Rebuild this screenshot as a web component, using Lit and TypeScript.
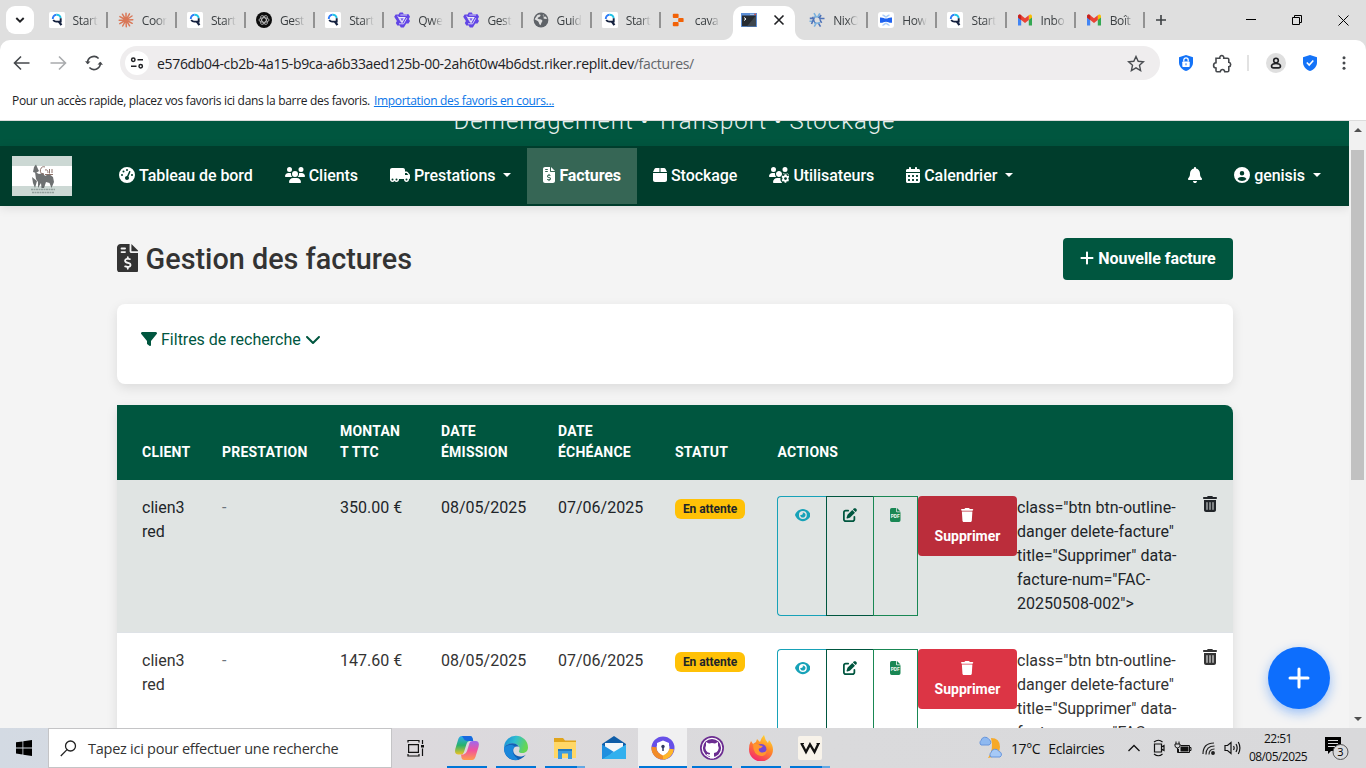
import { LitElement, html, css, svg, nothing } from "lit";
import { customElement, property } from "lit/decorators.js";

type Glyph = { w: number; d: string };

/* Solid glyphs on a 512-unit-high grid. */
const GLYPHS: Record<string, Glyph> = {
  gauge: { w: 512, d: "M0 256a256 256 0 1 1 512 0A256 256 0 1 1 0 256zM288 96a32 32 0 1 0 -64 0 32 32 0 1 0 64 0zM256 416c35.3 0 64-28.7 64-64c0-17.4-6.9-33.1-18.1-44.6L366 161.7c5.3-12.1-.2-26.3-12.3-31.6s-26.3 .2-31.6 12.3L257.9 288c-.6 0-1.3 0-1.9 0c-35.3 0-64 28.7-64 64s28.7 64 64 64zM176 144a32 32 0 1 0 -64 0 32 32 0 1 0 64 0zM96 288a32 32 0 1 0 0-64 32 32 0 1 0 0 64zm352-32a32 32 0 1 0 -64 0 32 32 0 1 0 64 0z" },
  users: { w: 640, d: "M144 0a80 80 0 1 1 0 160A80 80 0 1 1 144 0zM512 0a80 80 0 1 1 0 160A80 80 0 1 1 512 0zM0 298.7C0 239.8 47.8 192 106.7 192h42.7c15.9 0 31 3.5 44.6 9.7c-1.3 7.2-1.9 14.7-1.9 22.3c0 38.2 16.8 72.5 43.3 96c-.2 0-.4 0-.7 0H21.3C9.6 320 0 310.4 0 298.7zM405.3 320c-.2 0-.4 0-.7 0c26.6-23.5 43.3-57.8 43.3-96c0-7.6-.7-15-1.9-22.3c13.6-6.3 28.7-9.7 44.6-9.7h42.7C592.2 192 640 239.8 640 298.7c0 11.8-9.6 21.3-21.3 21.3H405.3zM224 224a96 96 0 1 1 192 0 96 96 0 1 1 -192 0zM128 485.3C128 411.7 187.7 352 261.3 352H378.7C452.3 352 512 411.7 512 485.3c0 14.7-11.9 26.7-26.7 26.7H154.7c-14.7 0-26.7-11.9-26.7-26.7z" },
  usersGear: { w: 640, d: "M144 160A80 80 0 1 0 144 0a80 80 0 1 0 0 160zm368 0A80 80 0 1 0 512 0a80 80 0 1 0 0 160zM0 298.7C0 310.4 9.6 320 21.3 320H234.7c.2 0 .4 0 .7 0c-26.6-23.5-43.3-57.8-43.3-96c0-7.6 .7-15 1.9-22.3c-13.6-6.3-28.7-9.7-44.6-9.7H106.7C47.8 192 0 239.8 0 298.7zM320 320c24 0 45.900-8.800 62.700-23.300L390 284C408 266 416 244 416 224c0-53-43-96-96-96s-96 43-96 96s43 96 96 96zM364.600 352H261.300C187.700 352 128 411.700 128 485.300c0 14.700 11.900 26.700 26.700 26.700H420L372 440 364 400zM445 208H600Q640 245 640 270L600 230 560 216H500L446 230zM496 234H560L568 272 596 288 630 274 640 300V324L620 350V386L640 412 614 466 576 456 560 466 552 500H502L490 464 468 454 434 466 404 414 430 386V350L402 320 430 272 468 284 490 270zM528 416a46 46 0 1 0 0-92 46 46 0 1 0 0 92z" },
  truck: { w: 640, d: "M64 32C28.7 32 0 60.7 0 96V304v80 16c0 44.2 35.8 80 80 80c26.2 0 49.4-12.6 64-32c14.6 19.4 37.8 32 64 32c44.2 0 80-35.8 80-80c0-5.5-.6-10.8-1.6-16H416h33.6c-1 5.2-1.600 10.500-1.600 16c0 44.2 35.8 80 80 80s80-35.8 80-80c0-5.5-.6-10.8-1.6-16H608c17.700 0 32-14.300 32-32V288 272 261.700c0-9.200-3.200-18.200-9-25.300l-58.800-71.800c-10.600-13-26.500-20.500-43.300-20.500H480V96c0-35.300-28.700-64-64-64H64zM585 256H480V192h48.800c2.400 0 4.700 1.100 6.200 2.900L585 256zM528 368a32 32 0 1 1 0 64 32 32 0 1 1 0-64zM176 400a32 32 0 1 1 64 0 32 32 0 1 1 -64 0zM80 368a32 32 0 1 1 0 64 32 32 0 1 1 0-64z" },
  invoice: { w: 384, d: "M64 0C28.7 0 0 28.7 0 64V448c0 35.3 28.7 64 64 64H320c35.3 0 64-28.7 64-64V160H256c-17.7 0-32-14.3-32-32V0H64zM256 0V128H384L256 0zM64 80c0-8.8 7.2-16 16-16h64c8.8 0 16 7.2 16 16s-7.2 16-16 16H80c-8.800 0-16-7.200-16-16zm0 64c0-8.800 7.200-16 16-16h64c8.800 0 16 7.200 16 16s-7.200 16-16 16H80c-8.800 0-16-7.200-16-16zm128 72c8.800 0 16 7.200 16 16v17.300c8.500 1.200 16.700 3.100 24.100 5.100c8.500 2.300 13.600 11 11.300 19.600s-11 13.600-19.600 11.300c-11.100-3-22-5.200-32.100-5.300c-8.400-.1-17.400 1.800-23.600 5.500c-5.700 3.400-8.100 7.300-8.100 12.800c0 3.700 1.300 6.500 7.300 10.100c6.900 4.100 16.600 7.100 29.200 10.900l.5 .1c11.300 3.400 25.300 7.600 36.300 14.600c12.100 7.600 22.400 19.700 22.700 38.200c.3 19.300-9.600 33.300-22.900 41.600c-7.700 4.800-16.400 7.600-25.100 9.100V440c0 8.800-7.200 16-16 16s-16-7.200-16-16V422.200c-11.200-2.100-21.700-5.700-30.900-8.900c-2.100-.7-4.200-1.400-6.200-2.100c-8.400-2.800-12.900-11.900-10.100-20.200s11.900-12.900 20.200-10.100c2.500 .8 4.800 1.600 7.100 2.400c13.600 4.600 24.600 8.400 36.300 8.700c9.100 .3 17.900-1.700 23.700-5.300c5.100-3.200 7.900-7.300 7.800-14c-.1-4.600-1.800-7.800-7.700-11.600c-6.800-4.300-16.500-7.400-29-11.200l-1.600-.5c-11-3.300-24.300-7.300-34.800-13.700c-12-7.200-22.600-18.900-22.700-37.300c-.1-19.400 10.800-32.800 23.800-40.500c7.500-4.400 15.800-7.200 24.100-8.700V232c0-8.800 7.200-16 16-16z" },
  box: { w: 448, d: "M50.7 58.5L0 160H208V32H93.7C75.5 32 58.9 42.3 50.7 58.5zM240 160H448L397.3 58.5C389.1 42.3 372.5 32 354.3 32H240V160zm208 32H0V416c0 35.3 28.7 64 64 64H384c35.3 0 64-28.7 64-64V192z" },
  calendar: { w: 448, d: "M128 0c17.7 0 32 14.3 32 32V64H288V32c0-17.7 14.3-32 32-32s32 14.3 32 32V64h48c26.500 0 48 21.500 48 48v48H0V112C0 85.500 21.500 64 48 64H96V32c0-17.700 14.300-32 32-32zM0 192H448V464c0 26.500-21.500 48-48 48H48c-26.500 0-48-21.500-48-48V192zm64 80v32c0 8.800 7.200 16 16 16h32c8.800 0 16-7.200 16-16V272c0-8.800-7.200-16-16-16H80c-8.800 0-16 7.200-16 16zm128 0v32c0 8.800 7.200 16 16 16h32c8.800 0 16-7.200 16-16V272c0-8.800-7.200-16-16-16H208c-8.800 0-16 7.200-16 16zm144-16c-8.800 0-16 7.200-16 16v32c0 8.800 7.200 16 16 16h32c8.800 0 16-7.200 16-16V272c0-8.800-7.200-16-16-16H336zM64 400v32c0 8.800 7.200 16 16 16h32c8.800 0 16-7.200 16-16V400c0-8.800-7.200-16-16-16H80c-8.800 0-16 7.200-16 16zm144-16c-8.800 0-16 7.200-16 16v32c0 8.800 7.200 16 16 16h32c8.800 0 16-7.200 16-16V400c0-8.800-7.200-16-16-16H208zm112 16v32c0 8.800 7.200 16 16 16h32c8.800 0 16-7.200 16-16V400c0-8.800-7.200-16-16-16H336c-8.800 0-16 7.200-16 16z" },
  bell: { w: 448, d: "M224 0c-17.7 0-32 14.3-32 32V51.2C119 66 64 130.6 64 208v18.8c0 47-17.3 92.4-48.5 127.6l-7.4 8.3c-8.4 9.4-10.4 22.9-5.3 34.4S19.4 416 32 416H416c12.6 0 24-7.4 29.2-18.9s3.1-25-5.3-34.4l-7.4-8.3C401.3 319.2 384 273.9 384 226.8V208c0-77.4-55-142-128-156.8V32c0-17.7-14.3-32-32-32zm45.3 493.3c12-12 18.7-28.3 18.7-45.3H224 160c0 17 6.7 33.3 18.7 45.3s28.3 18.7 45.3 18.7s33.3-6.7 45.3-18.7z" },
  circleUser: { w: 512, d: "M399 384.2C376.9 345.8 335.4 320 288 320H224c-47.4 0-88.9 25.8-111 64.2c35.2 39.2 86.2 63.8 143 63.8s107.8-24.7 143-63.8zM0 256a256 256 0 1 1 512 0A256 256 0 1 1 0 256zm256 16a72 72 0 1 0 0-144 72 72 0 1 0 0 144z" },
  plus: { w: 448, d: "M256 80c0-17.7-14.3-32-32-32s-32 14.3-32 32V224H48c-17.7 0-32 14.3-32 32s14.3 32 32 32H192V432c0 17.7 14.3 32 32 32s32-14.3 32-32V288H400c17.7 0 32-14.3 32-32s-14.3-32-32-32H256V80z" },
  filter: { w: 512, d: "M3.9 54.9C10.5 40.9 24.5 32 40 32H472c15.5 0 29.5 8.9 36.1 22.9s4.6 30.5-5.2 42.5L320 320.9V448c0 12.1-6.8 23.2-17.7 28.6s-23.8 4.3-33.5-3l-64-48c-8.1-6-12.8-15.5-12.8-25.6V320.9L9 97.3C-.7 85.4-2.8 68.8 3.9 54.9z" },
  chevron: { w: 512, d: "M233.4 406.6c12.5 12.5 32.8 12.5 45.3 0l192-192c12.5-12.5 12.5-32.8 0-45.3s-32.8-12.5-45.3 0L256 338.7 86.6 169.4c-12.5-12.5-32.8-12.5-45.3 0s-12.5 32.8 0 45.3l192 192z" },
  eye: { w: 576, d: "M288 32c-80.8 0-145.5 36.8-192.6 80.6C48.6 156 17.3 208 2.5 243.7c-3.3 7.9-3.3 16.7 0 24.6C17.3 304 48.6 356 95.4 399.4C142.5 443.2 207.2 480 288 480s145.5-36.8 192.6-80.6c46.8-43.5 78.1-95.4 93-131.1c3.3-7.900 3.300-16.700 0-24.600c-14.900-35.700-46.200-87.700-93-131.100C433.500 68.800 368.800 32 288 32zM144 256a144 144 0 1 1 288 0 144 144 0 1 1 -288 0zm144-64c0 35.300-28.700 64-64 64c-7.100 0-13.900-1.200-20.300-3.300c-5.500-1.800-11.900 1.600-11.700 7.400c.3 6.900 1.300 13.800 3.200 20.700c13.700 51.200 66.400 81.600 117.600 67.900s81.600-66.400 67.900-117.600c-11.100-41.500-47.800-69.400-88.600-71.100c-5.800-.2-9.200 6.100-7.400 11.700c2.100 6.400 3.300 13.200 3.300 20.300z" },
  edit: { w: 512, d: "M471.6 21.7c-21.9-21.9-57.3-21.9-79.2 0L362.3 51.7l97.9 97.9 30.1-30.1c21.9-21.9 21.9-57.3 0-79.2L471.6 21.7zm-299.2 220c-6.1 6.1-10.8 13.6-13.5 21.9l-29.6 88.8c-2.9 8.6-.6 18.1 5.8 24.6s15.9 8.7 24.6 5.8l88.8-29.6c8.2-2.7 15.7-7.4 21.9-13.5L437.7 172.3 339.7 74.3 172.4 241.7zM96 64C43 64 0 107 0 160V416c0 53 43 96 96 96H352c53 0 96-43 96-96V320c0-17.7-14.3-32-32-32s-32 14.3-32 32v96c0 17.7-14.3 32-32 32H96c-17.7 0-32-14.3-32-32V160c0-17.7 14.3-32 32-32h96c17.7 0 32-14.3 32-32s-14.3-32-32-32H96z" },
  trash: { w: 448, d: "M135.2 17.7L128 32H32C14.3 32 0 46.3 0 64S14.3 96 32 96H416c17.7 0 32-14.3 32-32s-14.3-32-32-32H320l-7.2-14.3C307.4 6.8 296.3 0 284.2 0H163.8c-12.1 0-23.2 6.8-28.6 17.7zM416 128H32L53.2 467c1.6 25.3 22.6 45 47.9 45H346.9c25.3 0 46.3-19.7 47.9-45L416 128z" },
  trashCan: { w: 448, d: "M135.2 17.7C140.6 6.8 151.7 0 163.8 0H284.2c12.1 0 23.2 6.8 28.6 17.7L320 32h96c17.7 0 32 14.3 32 32s-14.3 32-32 32H32C14.3 96 0 81.7 0 64S14.3 32 32 32h96l7.2-14.3zM32 128H416V448c0 35.3-28.7 64-64 64H96c-35.3 0-64-28.7-64-64V128zm96 64c-8.8 0-16 7.2-16 16V432c0 8.8 7.2 16 16 16s16-7.2 16-16V208c0-8.8-7.2-16-16-16zm96 0c-8.8 0-16 7.2-16 16V432c0 8.8 7.2 16 16 16s16-7.2 16-16V208c0-8.8-7.2-16-16-16zm96 0c-8.8 0-16 7.2-16 16V432c0 8.8 7.2 16 16 16s16-7.2 16-16V208c0-8.8-7.2-16-16-16z" },
};

const glyph = (name: string, size = 16) => {
  const g = GLYPHS[name];
  return html`<svg class="glyph" width=${(g.w / 512) * size} height=${size} viewBox="0 0 ${g.w} 512" fill="currentColor" fill-rule="evenodd"><path d=${g.d}></path></svg>`;
};

const pdfGlyph = html`<svg class="glyph" width="10.5" height="14" viewBox="0 0 10.5 14"><path fill="currentColor" d="M1.700 0H6.200V3.500Q6.200 4.300 7 4.300H10.500V12.300Q10.500 14 8.800 14H1.700Q0 14 0 12.300V1.700Q0 0 1.700 0zM7 0V3.500H10.500z"></path><text x="5.25" y="10.300" text-anchor="middle" font-family="Roboto, sans-serif" font-size="5" font-weight="700" fill="#f0f6f3">PDF</text></svg>`;

/* 16px favicons of the browser tabs. */
const FAVICONS: Record<string, unknown> = {
  search: svg`<rect width="16" height="16" rx="1.500" fill="#fff"/><g fill="none" stroke-width="1.900"><path d="M3.800 7A3.900 3.900 0 0 1 7.400 2.700" stroke="#2f7bf6"/><path d="M7.400 2.700A3.900 3.900 0 0 1 11.700 6.300" stroke="#22c3e6"/><path d="M11.700 6.300V9.600H7.800A3.900 3.900 0 0 1 4.200 8" stroke="#14213f"/><path d="M9.800 9.300L12.400 13.200" stroke="#14213f" stroke-width="2.200"/></g>`,
  burst: svg`<g stroke="#d97757" stroke-width="1.500" stroke-linecap="round"><path d="M8 8L8 1.200M8 8L11.500 1.800M8 8L14 4M8 8L14.800 7.700M8 8L14.200 11.300M8 8L11.600 13.800M8 8L8.300 14.800M8 8L4.700 14M8 8L1.800 11.600M8 8L1.200 8.200M8 8L1.900 4.600M8 8L4.400 2.200"/></g>`,
  knot: svg`<circle cx="8" cy="8" r="8" fill="#0d0d0d"/><g fill="none" stroke="#dedede" stroke-width=".7"><ellipse cx="8" cy="8" rx="5" ry="2.200"/><ellipse cx="8" cy="8" rx="5" ry="2.200" transform="rotate(60 8 8)"/><ellipse cx="8" cy="8" rx="5" ry="2.200" transform="rotate(120 8 8)"/></g>`,
  qwen: svg`<path d="M5.800 .5H8.800L9.800 2.300H14.600L16 4.800L14.800 6.900L16 9L14.500 11.500H12.300L9.800 15.600H6.800L5.700 13.600H3.300L1.800 11L2.900 9L.2 4.800L1.600 2.400H4.600z" fill="#6246e5"/><path d="M4.200 5H11.800L8 11.500z" fill="#ececf4"/><path d="M6.300 3H13M3.600 3.800L7 9.800M12.800 6.200L9.300 12.300M5 11.800H9" stroke="#d5cef6" stroke-width="1" fill="none"/><path d="M6.300 6.200H9.700L8 9.200z" fill="#7a62ee"/>`,
  globe: svg`<circle cx="8" cy="8" r="7.400" fill="#5f6368"/><path d="M4.300 3.300C7 1.500 8.500 3 7 4.400L4.800 5.800C4 7 6.500 7.300 8 7.500C10 8 9.500 9.500 8.600 10.500L7.500 13.200C6 12.500 6.200 10.300 5 9.200L1.600 7.200M10.300 2C9 4 10.500 5 12.500 4.500L14.300 6.500C13 7.500 11.500 6.500 10.800 7" fill="#dfdfdf"/>`,
  replit: svg`<g fill="#f26207"><rect x="1.800" y="1.800" width="5.800" height="4.200" rx=".9"/><rect x="7.200" y="5.900" width="5.400" height="4.200" rx=".9"/><rect x="1.800" y="10" width="5.800" height="4.200" rx=".9"/></g>`,
  terminal: svg`<rect y="1" width="16" height="14" fill="#5d8fd6"/><rect x="1" y="3.500" width="14" height="10.700" fill="#262b31"/><path d="M15 3.500V14.200H6z" fill="#3e464e"/><path d="M3 5.500L5 7L3 8.500" stroke="#fff" fill="none"/><path d="M9.500 2.300H10.500M11.500 2.300H12.500" stroke="#fff"/><rect x="13.400" y="1.700" width="1.600" height="1.300" fill="#e24a3a"/>`,
  nix: svg`<g fill="none" stroke-width="1.600"><path d="M5 1.200L8 6.400M10.800 1.300L7.300 7.300M4.500 5H11" stroke="#7ab1de"/><path d="M15.500 6.500L9.500 6.500M12.600 10.800L9.400 5.200M11.500 14.600L8.200 9.200" stroke="#5074b8"/><path d="M5.200 14.600L8.300 9.300M11 10.900H5M.5 9.300H6.500" stroke="#7ab1de"/><path d="M3.300 5L6.500 10.500M.8 6.400H5L2.500 12" stroke="#5074b8"/><path d="M12 3L9.500 7.500" stroke="#5074b8"/></g><circle cx="8" cy="8" r="2.500" fill="#dfdfdf"/>`,
  bone: svg`<rect width="16" height="16" rx="3" fill="#fff"/><path d="M2 5.500C5 5.200 6 6.600 8 6.600S11 5.200 14 5.500V10.800C11 11 10 9.700 8 9.700S5 11 2 10.800z" fill="#1f63ef"/><path d="M4.500 3.500C5.500 2.500 7 5 8 5S10.500 2.500 11.500 3.500M4.500 12.800C5.500 13.800 7 11.300 8 11.300S10.500 13.800 11.500 12.800" fill="none" stroke="#a9cdfb" stroke-width="1.600"/>`,
  gmail: svg`<path d="M1 13.500V4.500L4.200 6.900V13.500z" fill="#4285f4"/><path d="M11.800 13.500V6.900L15 4.500V13.500z" fill="#34a853"/><path d="M11.800 3.300L13 2.500Q15 2 15 4.500V5.500L11.800 8z" fill="#fbbc04"/><path d="M1 5.500V4.300Q1.200 2 3.200 2.600L8 6.300L11.800 3.300V8L8 10.900z" fill="#ea4335"/><path d="M1 4.300Q1.200 2 3.200 2.600L4.200 3.400V8L1 5.500z" fill="#c5221f"/>`,
};

const favicon = (name: string) => html`<svg class="favicon" width="16" height="16" viewBox="0 0 16 16">${FAVICONS[name]}</svg>`;

@customElement("browser-chrome")
class BrowserChrome extends LitElement {
  static styles = css`
    :host { display: block; height: 121px; background: #dfdfdf; font-family: "Open Sans", "Noto Sans", sans-serif; color: #202124; }
    svg { display: block; flex: none; }
    .strip { display: flex; height: 40px; align-items: center; }
    .dropdown { width: 28px; height: 28px; margin: 0 4.600px 0 6px; border-radius: 9px; background: #fff; display: grid; place-items: center; }
    .tabs { display: flex; height: 40px; width: 1106.400px; }
    .tab { box-sizing: border-box; flex: 1 1 0; min-width: 0; display: flex; align-items: center; padding-left: 10px; gap: 8px; }
    .title { width: 25px; margin-right: auto; overflow: hidden; white-space: nowrap; font-size: 12px; letter-spacing: -0.4px; color: #3c4043; -webkit-mask-image: linear-gradient(90deg, #000 55%, transparent 100%); mask-image: linear-gradient(90deg, #000 55%, transparent 100%); }
    .rule { width: 2px; height: 16px; background: #929292; }
    .active { padding: 6px 3px 0 2px; align-items: stretch; gap: 0; margin: 0 -9px; flex: 0 0 87.200px; }
    .active::before, .active::after { content: ""; width: 10px; height: 10px; align-self: flex-end; }
    .active::before { background: radial-gradient(circle at 0 0, transparent 9.500px, #fff 10.500px); }
    .active::after { background: radial-gradient(circle at 100% 0, transparent 9.500px, #fff 10.500px); }
    .face { flex: 1; display: flex; align-items: center; justify-content: space-between; padding: 0 10px 6px 8px; background: #fff; border-radius: 10px 10px 0 0; box-sizing: border-box; }
    .add { width: 32px; display: grid; place-items: center; }
    .window { margin-left: auto; display: flex; gap: 0; }
    .window span { width: 46px; height: 40px; display: grid; place-items: center; }
    .toolbar { display: flex; align-items: center; height: 46px; padding: 0 14px 0 13px; background: #fff; border-radius: 10px 10px 0 0; box-sizing: border-box; }
    .nav { display: flex; gap: 18px; width: 107px; }
    .address { display: flex; align-items: center; width: 1040px; height: 34px; box-sizing: border-box; padding: 0 15px 0 5px; border-radius: 17px; background: #efedee; }
    .site { width: 24px; height: 24px; border-radius: 50%; background: #fff; display: grid; place-items: center; margin-right: 8px; }
    .url { font-size: 14px; letter-spacing: -0.328px; white-space: nowrap; margin-right: auto; }
    .path { color: #63666b; }
    .tools { display: flex; align-items: center; margin-left: 17px; flex: 1; }
    .ext { margin-left: 16.500px; }
    .divider { width: 2px; height: 16px; background: #e2e2e2; margin: 0 17px 0 15.500px; }
    .avatar { width: 20px; height: 20px; border-radius: 50%; background: #dfdfdf; display: grid; place-items: center; margin-right: 16px; }
    .more { margin-left: auto; }
    .bookmarks { display: flex; align-items: center; padding: 0 12px 6px; background: #fff; font-size: 12px; letter-spacing: -0.31px; border-bottom: 1px solid #dcdcdc; gap: 4px; box-sizing: border-box; height: 35px; white-space: nowrap; }
    .link { color: #0b76e8; text-decoration: underline; }
  `;

  private tabs: [string, string][] = [
    ["search", "Start"], ["burst", "Coor"], ["search", "Start"], ["knot", "Gest"], ["search", "Start"],
    ["qwen", "Qwe"], ["qwen", "Gest"], ["globe", "Guid"], ["search", "Start"], ["replit", "cava"],
    ["terminal", ""], ["nix", "NixO"], ["bone", "How"], ["search", "Start"], ["gmail", "Inbo"], ["gmail", "Boît"],
  ];

  render() {
    return html`
      <div class="strip">
        <div class="dropdown"><svg width="10" height="8" viewBox="0 0 10 8" fill="none" stroke="#202124" stroke-width="1.900"><path d="M1.300 2L5 5.700L8.700 2"/></svg></div>
        <div class="tabs">
          ${this.tabs.map(([icon, title], i) =>
            title === ""
              ? html`<div class="tab active"><div class="face">${favicon(icon)}<svg width="12" height="12" viewBox="0 0 12 12" stroke="#202124" stroke-width="1.600"><path d="M1.500 1.500L10.500 10.500M10.500 1.500L1.500 10.500"/></svg></div></div>`
              : html`<div class="tab">${favicon(icon)}<span class="title">${title}</span>${i === 9 ? nothing : html`<i class="rule"></i>`}</div>`
          )}
        </div>
        <div class="add"><svg width="10" height="10" viewBox="0 0 10 10" stroke="#3c4043" stroke-width="1.600"><path d="M5 0V10M0 5H10"/></svg></div>
        <div class="window">
          <span><svg width="10" height="10" stroke="#000"><path d="M0 4.500H10"/></svg></span>
          <span><svg width="11" height="11" fill="none" stroke="#000"><path d="M.5 2.500H7.500V9.500H.5zM2.500 2.500V.5H9.500V7.500H7.500"/></svg></span>
          <span><svg width="11" height="11" stroke="#000"><path d="M.5 .5L10.500 10.500M10.500 .5L.5 10.500"/></svg></span>
        </div>
      </div>
      <div class="toolbar">
        <div class="nav">
          <svg width="18" height="16" viewBox="0 0 18 16" fill="none" stroke="#45484c" stroke-width="1.600"><path d="M16.500 8H2M8 1.500L1.500 8L8 14.500"/></svg>
          <svg width="18" height="16" viewBox="0 0 18 16" fill="none" stroke="#a9abad" stroke-width="1.600"><path d="M1.500 8H16M10 1.500L16.500 8L10 14.500"/></svg>
          <svg width="18" height="16" viewBox="0 0 18 16" fill="none" stroke="#45484c" stroke-width="1.600"><path d="M2.600 8.500A6.400 6.400 0 0 1 13.600 3.500M15.400 7.500A6.400 6.400 0 0 1 4.400 12.500"/><path d="M0 6.200L2.700 9.300L5.500 6.500M12.500 9.500L15.300 6.700L18 9.800" fill="#45484c" stroke="none"/></svg>
        </div>
        <div class="address">
          <span class="site"><svg width="14" height="12" viewBox="0 0 14 12" fill="none" stroke="#202124" stroke-width="1.500"><circle cx="3.300" cy="2.800" r="1.700"/><path d="M7.500 2.800H13M1 9.200H6.500"/><circle cx="10.700" cy="9.200" r="1.700"/></svg></span>
          <span class="url">e576db04-cb2b-4a15-b9ca-a6b33aed125b-00-2ah6t0w4b6dst.riker.replit.dev<span class="path">/factures/</span></span>
          <svg width="18" height="17" viewBox="0 0 18 17" fill="none" stroke="#4a4d51" stroke-width="1.400"><path d="M9 1.500L11.200 6.300L16.400 6.800L12.500 10.300L13.600 15.500L9 12.800L4.400 15.500L5.500 10.300L1.600 6.800L6.800 6.300z"/></svg>
        </div>
        <div class="tools">
          <svg width="18" height="18" viewBox="0 0 18 18"><path d="M9 1L16 3.300V8.500C16 12.500 13 15.600 9 17C5 15.600 2 12.500 2 8.500V3.300z" fill="#1473f8"/><rect x="5.300" y="7.500" width="7.400" height="5.500" rx=".8" fill="#fff"/><path d="M6.800 7.500V6A2.200 2.200 0 0 1 11.200 6V7.500" fill="none" stroke="#fff" stroke-width="1.300"/><path d="M9 9.300V11.300" stroke="#1473f8"/></svg>
          <svg class="ext" width="20" height="19" viewBox="0 0 20 19" fill="none" stroke="#45484c" stroke-width="1.600"><path d="M4 4.200H7.800C7.300 .6 12.300 .6 11.800 4.200H15.500Q16.800 4.200 16.800 5.500V8.200C19.300 8.600 19.300 12.400 16.800 12.800V16.500Q16.800 17.800 15.500 17.800H12.800C12.300 14.800 8.800 14.800 8.200 17.800H5Q4 17.800 4 16.500V14C.8 14 .8 9 4 8.800z"/></svg>
          <i class="divider"></i>
          <span class="avatar"><svg width="12" height="12" viewBox="0 0 12 12" fill="none" stroke="#202124" stroke-width="1.600"><circle cx="6" cy="3.500" r="2.300"/><path d="M3.500 10.900Q1.500 10.900 1.500 9Q2 6.500 6 6.500T10.500 9Q10.500 10.900 8.500 10.900z"/></svg></span>
          <svg width="16" height="18" viewBox="1 0 16 18"><path d="M9 1L16 3.300V8.500C16 12.500 13 15.600 9 17C5 15.600 2 12.500 2 8.500V3.300z" fill="#1473f8"/><path d="M5.800 8.500L8.200 11L12.300 6.500" fill="none" stroke="#fff" stroke-width="1.600"/></svg>
          <svg class="more" width="16" height="16" viewBox="0 0 16 16" fill="#45484c"><circle cx="8" cy="2.800" r="1.500"/><circle cx="8" cy="8" r="1.500"/><circle cx="8" cy="13.200" r="1.500"/></svg>
        </div>
      </div>
      <div class="bookmarks"><span>Pour un accès rapide, placez vos favoris ici dans la barre des favoris.</span><span class="link">Importation des favoris en cours...</span></div>
    `;
  }
}

@customElement("site-nav")
class SiteNav extends LitElement {
  static styles = css`
    :host { display: block; position: relative; font-family: Roboto, sans-serif; }
    .banner { height: 25px; background: #00563f; overflow: hidden; display: flex; justify-content: center; align-items: flex-end; }
    .slogan { color: #e5efec; font-size: 24px; font-weight: 300; letter-spacing: 1px; line-height: 30px; white-space: nowrap; margin-bottom: 10px; }
    nav { display: flex; align-items: center; height: 60px; background: #003d2c; padding: 0 12px; box-sizing: border-box; box-shadow: 0 2px 10px rgba(0, 0, 0, 0.1); }
    .logo { display: block; margin-right: 31px; }
    .item { display: flex; align-items: center; height: 56px; box-sizing: border-box; padding: 0 16px 2px; color: #fff; font-size: 16px; font-weight: 500; letter-spacing: -0.06px; white-space: nowrap; }
    .item span { margin-left: 4px; }
    .current { background: #366655; font-weight: 700; letter-spacing: -0.1px; }
    .caret { border: 4.8px solid transparent; border-top-color: #fff; border-bottom: 0; margin-left: 8px; }
    .end { margin-left: auto; display: flex; }
    svg { flex: none; }
  `;
  private items: [string, string, boolean, boolean][] = [
    ["gauge", "Tableau de bord", false, false], ["users", "Clients", false, false], ["truck", "Prestations", true, false],
    ["invoice", "Factures", false, true], ["box", "Stockage", false, false], ["usersGear", "Utilisateurs", false, false], ["calendar", "Calendrier", true, false],
  ];
  render() {
    return html`
      <div class="banner"><div class="slogan">Déménagement • Transport • Stockage</div></div>
      <nav>
        <svg class="logo" width="60" height="40" viewBox="0 0 60 40">
          <rect width="60" height="40" fill="#ccd8d4"/><rect y="10" width="60" height="20" fill="#fff"/>
          <g fill="#55595a" opacity=".85"><path d="M22 11L24 8.500L25.500 12L27 15L24 17L21 16z"/><path d="M23 16L27 18L31 17L33 20L37 18L41 21L42 26L39.500 32L37.500 27L34 26L32 32L29.500 32L29 27L26 32L26 26L24 23z"/><path d="M20 21L25 25L23 32L21 27z"/></g>
          <path d="M33 11C28 9 26 18.500 32 18M33 14Q36 13 36 17M37.500 13V17.500M40 13V17M33 18.500H41" fill="none" stroke="#8b7068" stroke-width="1"/>
          <path d="M19 33.500H43M20 36.500H42" stroke="#7b8986" stroke-width="1.600" stroke-dasharray="2 .5" opacity=".7"/>
        </svg>
        ${this.items.map(([icon, label, menu, current]) => html`<a class="item ${current ? "current" : ""}">${glyph(icon)}<span>${label}</span>${menu ? html`<i class="caret"></i>` : nothing}</a>`)}
        <div class="end"><a class="item">${glyph("bell")}</a><a class="item">${glyph("circleUser")}<span>genisis</span><i class="caret"></i></a></div>
      </nav>`;
  }
}

@customElement("invoice-row")
class InvoiceRow extends LitElement {
  @property() amount = "";
  @property({ type: Boolean, reflect: true }) hovered = false;

  static styles = css`
    :host { display: grid; grid-template-columns: 89px 118px 101px 117px 117px 102.5px 1fr; box-sizing: border-box; height: 153px; border-bottom: 1px solid #dee2e6; background: #fff; color: #333; font: 400 16px/24px Roboto, sans-serif; }
    :host([hovered]) { background: #e0e4e3; color: #212529; }
    .cell { padding: 16px 0 0 16px; white-space: nowrap; }
    .client { padding-left: 25px; }
    .muted { color: #6c757d; }
    .badge { display: inline-block; width: 70px; height: 20px; box-sizing: border-box; margin-top: 3px; padding: 4px 0; text-align: center; letter-spacing: -0.06px; border-radius: 6px; background: #ffc107; color: #212529; font: 700 12px/12px Roboto, sans-serif; }
    .actions { display: flex; align-items: flex-start; padding: 16px 16px 0 15.500px; }
    .btn { box-sizing: border-box; height: 120px; display: flex; justify-content: center; padding-top: 11px; border: 1px solid; }
    .view { width: 49px; padding-left: 1px; border-color: #17a2b8; color: #17a2b8; border-right: 0; border-radius: 4px 0 0 4px; }
    .edit { width: 48px; border-color: #00563f; color: #00563f; }
    .pdf { width: 45px; margin-left: -1px; border-color: #198754; color: #198754; }
    .delete { width: 99px; height: 60px; box-sizing: border-box; padding-top: 11.500px; border-radius: 4px; background: #dc3545; color: #fff; display: flex; flex-direction: column; align-items: center; gap: 4px; font: 700 14px/21px Roboto, sans-serif; }
    :host([hovered]) .delete { background: #bb2d3b; }
    .leak { white-space: pre; }
    .bin { margin-left: auto; height: 16px; }
    svg { display: block; flex: none; }
  `;
  render() {
    return html`
      <div class="cell client">clien3<br />red</div>
      <div class="cell muted">-</div>
      <div class="cell">${this.amount}</div>
      <div class="cell">08/05/2025</div>
      <div class="cell">07/06/2025</div>
      <div class="cell"><span class="badge">En attente</span></div>
      <div class="actions">
        <a class="btn view">${glyph("eye", 14)}</a><a class="btn edit">${glyph("edit", 14)}</a><a class="btn pdf">${pdfGlyph}</a>
        <a class="delete">${glyph("trash", 14)}<span>Supprimer</span></a>
        <div class="leak">${'class="btn btn-outline-\ndanger delete-facture"\ntitle="Supprimer" data-\nfacture-num="FAC-\n20250508-002">'}</div>
        <span class="bin">${glyph("trashCan", 16)}</span>
      </div>`;
  }
}

@customElement("invoice-page")
class InvoicePage extends LitElement {
  static styles = css`
    :host { display: block; position: relative; height: 607px; overflow: hidden; background: #f4f4f4; font-family: Roboto, sans-serif; }
    main { padding: 32px 116px 0 117px; }
    .head { display: flex; align-items: center; height: 42px; color: #333; }
    h1 { display: flex; align-items: center; gap: 7.500px; margin: 0 0 0 -0.500px; font-size: 28.800px; font-weight: 500; letter-spacing: 0; }
    h1 svg { margin-bottom: 2px; }
    .new { margin-left: auto; width: 170px; height: 42px; box-sizing: border-box; padding-bottom: 2px; border-radius: 4px; background: #00563f; color: #fff; font-size: 16px; letter-spacing: -0.06px; font-weight: 700; display: flex; align-items: center; justify-content: center; gap: 4px; white-space: nowrap; }
    .filters { box-sizing: border-box; height: 80px; margin: 24px 0 21px; padding: 23px 24px; border-radius: 8px; background: #fff; box-shadow: 0 4px 12px rgba(0, 0, 0, 0.1); }
    .toggle { display: flex; align-items: center; gap: 4px; height: 24px; color: #00563f; font-size: 16px; }
    .table { border-radius: 0 8px 0 0; overflow: visible; box-shadow: 0 4px 12px rgba(0, 0, 0, 0.1); }
    .columns { display: grid; grid-template-columns: 89px 118px 101px 117px 117px 102.5px 1fr; align-items: end; height: 75px; box-sizing: border-box; padding-bottom: 17px; background: #00563f; border-radius: 0 8px 0 0; color: #fff; font-size: 14px; letter-spacing: 0.22px; line-height: 21px; font-weight: 700; white-space: nowrap; }
    .columns div { padding-left: 16px; }
    .columns .first { padding-left: 25px; }
    .fab { position: absolute; right: 19px; bottom: 19px; width: 62px; height: 62px; border-radius: 50%; background: #0d6efd; color: #fff; display: grid; place-items: center; box-shadow: 0 4px 12px rgba(13, 110, 253, 0.4); }
    svg { flex: none; display: block; }
  `;
  render() {
    return html`
      <site-nav></site-nav>
      <main>
        <div class="head"><h1>${glyph("invoice", 28.8)}<span>Gestion des factures</span></h1><a class="new">${glyph("plus")}<span>Nouvelle facture</span></a></div>
        <section class="filters"><div class="toggle">${glyph("filter")}<span>Filtres de recherche</span>${glyph("chevron")}</div></section>
        <section class="table">
          <div class="columns"><div class="first">CLIENT</div><div>PRESTATION</div><div>MONTAN<br />T TTC</div><div>DATE<br />ÉMISSION</div><div>DATE<br />ÉCHÉANCE</div><div>STATUT</div><div>ACTIONS</div></div>
          <invoice-row hovered amount="350.00 €"></invoice-row>
          <invoice-row amount="147.60 €"></invoice-row>
        </section>
      </main>
      <a class="fab"><svg width="22" height="22" viewBox="0 0 22 22" stroke="currentColor" stroke-width="3" stroke-linecap="round"><path d="M11 2V20M2 11H20"/></svg></a>`;
  }
}

@customElement("task-bar")
class TaskBar extends LitElement {
  static styles = css`
    :host { display: flex; height: 40px; background: linear-gradient(90deg, #d3dae3 0, #dcd9dd 30%, #dadadc 60%, #d9d9db 100%); font-family: "Open Sans", "Noto Sans", sans-serif; color: #111; }
    svg { display: block; flex: none; }
    .start { width: 48px; display: grid; place-items: center; }
    .search { box-sizing: border-box; width: 344px; height: 40px; border: 1px solid #c4c4c6; background: #fff; display: flex; align-items: center; padding-left: 11px; gap: 11px; font-size: 14.500px; letter-spacing: -0.26px; color: #333; white-space: nowrap; }
    .apps { display: flex; }
    .app { width: 49px; height: 40px; box-sizing: border-box; display: flex; flex-direction: column; align-items: center; padding-top: 7px; }
    .first { width: 50px; padding-right: 2px; }
    .app svg { height: 26px; }
    .line { display: block; width: 40px; height: 2px; margin-top: 5px; background: #0076d7; }
    .stacked { background: linear-gradient(90deg, #0076d7 80%, #62a8e4 80%); }
    .focused { background: #f0f0f1; }
    .focused .line { width: 48px; }
    .tray { margin-left: auto; display: flex; align-items: center; white-space: nowrap; font-size: 14px; }
    .weather { display: flex; align-items: center; letter-spacing: -0.38px; width: 149px; }
    .temp { margin: 0 8px 0 8px; }
    .system { display: flex; align-items: center; gap: 8.500px; }
    .clock { width: 62px; text-align: center; font-size: 12px; letter-spacing: -0.55px; line-height: 18px; margin-left: 6px; }
    .notice { margin: 0 17px 0 15px; }
  `;
  render() {
    const app = (icon: unknown, kind = "line", extra = "") =>
      html`<div class="app ${extra}"><svg width="26" height="26" viewBox="0 0 26 26">${icon}</svg>${kind ? html`<i class=${kind}></i>` : nothing}</div>`;
    return html`
      <div class="start"><svg width="16" height="16" viewBox="0 0 16 16"><path d="M0 2.300L6.500 1.400V7.500H0zM7.300 1.300L16 0V7.500H7.300zM0 8.400H6.500V14.500L0 13.600zM7.300 8.400H16V16L7.300 14.700z"/></svg></div>
      <div class="search"><svg width="17" height="17" viewBox="0 0 17 17" fill="none" stroke="#222" stroke-width="1.300"><circle cx="10.500" cy="6" r="5"/><path d="M7 9.600L.8 16"/></svg><span>Tapez ici pour effectuer une recherche</span></div>
      <div class="apps">
        ${app(svg`<g fill="none" stroke="#111" stroke-width="1.200"><path d="M5 7.500V5.500H16V7.500M5 19V21H16V19M5.600 9.600H15.400V17.400H5.600z"/><path d="M19.500 5V9M19.500 13.500V21"/></g><rect x="18" y="10" width="3" height="2.500" fill="#111"/>`, "", "first")}
        ${app(svg`<defs><linearGradient id="a" y2="1" x2="0"><stop stop-color="#2aa6f5"/><stop offset=".5" stop-color="#28b26c"/><stop offset="1" stop-color="#efc224"/></linearGradient><linearGradient id="b" y2="1" x2="0"><stop stop-color="#9d68ef"/><stop offset=".5" stop-color="#f2539a"/><stop offset="1" stop-color="#ff9c4e"/></linearGradient></defs><path d="M8 1H16Q18 1 18.500 3L19 6H16Q13.500 6 12.500 9L10 17Q9.300 19.500 7 19.500H4Q0 19 1.300 14L4 5Q5 1 8 1z" fill="url(#a)"/><path d="M8 1H16Q18 1 18.500 3L19.300 6H13L10.500 5z" fill="#1769df"/><path d="M18 25H10Q8 25 7.500 23L7 19.500H9.500Q12 19 13 16L15.500 8Q16.200 6 18.500 6H22Q26 6.500 24.500 12L22 20Q21 25 18 25z" fill="url(#b)"/>`)}
        ${app(svg`<defs><linearGradient id="e" x2="1" y2=".3"><stop stop-color="#1686d9"/><stop offset=".5" stop-color="#30bed0"/><stop offset="1" stop-color="#66d653"/></linearGradient></defs><path d="M1 13A12 12 0 0 1 25 12.500C25 17.500 20 19 16.500 17.500C15 16.500 17 15.500 16.500 12.500C15 7.500 5 6.500 1 13z" fill="url(#e)"/><path d="M1 13C4 7 14 6.500 16 12C11 10 8.500 15 11.500 19C14 22 19 22.500 23 19.500C15 30 1 25 1 13z" fill="#1260b5"/><path d="M1 13C5 9 10 9.500 12 11.500C8.500 14 9 20 14 23L15 25C6 25.500 1 20 1 13z" fill="#1b87db"/>`)}
        ${app(svg`<path d="M2 3H11L13 5.500H24V23H2z" fill="#e0a41b"/><path d="M2 7H24V23H2z" fill="#ffd766"/><path d="M6 14H20V24H16V18.500H10V24H6z" fill="#3a9ae0"/><path d="M6 14H20V16H6z" fill="#2279c0"/>`, "line stacked")}
        ${app(svg`<path d="M1 9L13 1L25 9V24H1z" fill="#0f5da8"/><path d="M4 8H22V15L13 20L4 15z" fill="#f4f7fa"/><path d="M1 9.500L13 17L1 24z" fill="#1f8fdf"/><path d="M25 9.500V24H1z" fill="#32b0ee"/>`, "")}
        ${app(svg`<circle cx="13" cy="13" r="9" fill="none" stroke="#6750e8" stroke-width="5"/><path d="M4 12A9 9 0 0 0 13 22L15 22" fill="none" stroke="#f28c28" stroke-width="5"/><path d="M21.500 14A9 9 0 0 1 13 22" fill="none" stroke="#ffb72b" stroke-width="5"/><path d="M13 5.500L19 8V14Q18 18 13 20.500Q8 18 7 14V8z" fill="#fff"/><circle cx="13" cy="11.500" r="1.700" fill="#333a62"/><path d="M13 12V16" stroke="#333a62" stroke-width="1.500"/>`, "line", "focused")}
        ${app(svg`<circle cx="13" cy="13" r="12" fill="#6c2d91"/><path d="M7 7L10 8.500Q13 7.700 16 8.500L19 7V10.500Q20.500 13 19 15.500Q18 17.500 15 18V23.500H11V21Q8 21.500 7.500 19L9 19Q10 20 11 19V18Q8 17.500 7 15.500Q5.500 13 7 10.500z" fill="#fff"/><circle cx="13" cy="13" r="9.700" fill="none" stroke="#fff" stroke-width="1.200"/>`)}
        ${app(svg`<defs><linearGradient id="f" x1=".8" x2=".3" y2="1"><stop stop-color="#ffe034"/><stop offset=".45" stop-color="#ff8a28"/><stop offset="1" stop-color="#f5256f"/></linearGradient></defs><path d="M3 6L5 9L8 7L9 4L12 7Q13 3 16 0Q17 5 20 8L21 5Q25 10 25 14.500A12 12 0 0 1 1 14.500Q1 9 3 6z" fill="url(#f)"/><circle cx="13" cy="14.500" r="5.500" fill="#7548d3"/><path d="M5 9Q10 8 12 10.500L15 11Q13 13.500 11 13.500Q10 16 13 17.500Q17 18 19 15Q18.500 21 13 21Q5 20 5 9z" fill="#ff9630"/>`)}
        ${app(svg`<rect x="1" y="1" width="24" height="24" rx="2" fill="#f8f3ea"/><path d="M4.500 8.500L9 17L13 9.500L17.500 17L21.500 8.500" fill="none" stroke="#111" stroke-width="2.400"/><path d="M3.500 8.500H7M19.500 8.500H23" stroke="#111" stroke-width="1.200"/>`, "line stacked")}
      </div>
      <div class="tray">
        <div class="weather"><svg width="25" height="26" viewBox="0 0 25 26"><path d="M13 3Q22 3 22 12Q22 21 10 23Q16 15 13 3z" fill="#f6a928"/><path d="M3 10A3 3 0 0 1 3 5.500A4.300 4.300 0 0 1 11 4.500A3 3 0 0 1 11 10z" fill="#8fb9f0" stroke="#6695dd"/><path d="M13 22A3 3 0 0 1 13 17.500A4.300 4.300 0 0 1 21 16.500A3 3 0 0 1 22 22z" fill="#a6c9f6" stroke="#6695dd"/></svg><span class="temp">17°C</span><span>Eclaircies</span></div>
        <div class="system">
          <svg width="14" height="16" viewBox="0 0 14 16" fill="none" stroke="#111" stroke-width="1.300"><path d="M1.500 11L7 5.500L12.500 11"/></svg>
          <svg width="16" height="18" viewBox="0 0 16 18" fill="none" stroke="#111" stroke-width="1.200"><path d="M4.500 5H11.500V13H4.500zM11.500 8L14 6.500V11.500L11.500 10M4 3Q8.500 -.5 12.500 3M4 15Q8.500 18.500 12.500 15"/></svg>
          <svg width="18" height="16" viewBox="0 0 18 16" fill="none" stroke="#111"><path d="M6.500 5.500H15.500V12.500H4.500V9M15.500 7.500H17V10.500H15.500"/><rect x="7" y="7" width="7" height="4" fill="#111"/><path d="M2 1.500V4M5 1.500V4M1 4H6V6Q5.500 8 3.500 8Q1.500 8 1 6zM3.500 8V12.500H5"/></svg>
          <svg width="15" height="16" viewBox="0 0 15 16" fill="none" stroke="#222" stroke-width="1.200"><path d="M2 14Q2 3 13 3M5 14.500Q5 6 13.500 6M8 14.500Q8 9 13.500 9"/><circle cx="12" cy="13" r="1.300" fill="#222"/></svg>
          <svg width="17" height="16" viewBox="0 0 17 16" fill="none" stroke="#111" stroke-width="1.200"><path d="M1 5.500H3.500L7 2.500V13.500L3.500 10.500H1zM9.500 6Q10.800 8 9.500 10M12 4Q14.300 8 12 12M14.300 2Q17.500 8 14.300 14"/></svg>
        </div>
        <div class="clock">22:51<br />08/05/2025</div>
        <svg class="notice" width="25" height="26" viewBox="0 0 25 26"><path d="M1 2H17V16H7L4 19V16H1z"/><path d="M4 5.500H14M4 8.500H14M4 11.500H11" stroke="#dadadc"/><circle cx="16.500" cy="17" r="7.500" fill="#dadadc" stroke="#555"/><text x="16.500" y="21" text-anchor="middle" font-size="11" font-family="Open Sans, sans-serif">3</text></svg>
      </div>`;
  }
}

@customElement("app-root")
class AppRoot extends LitElement {
  static styles = css`
    :host { display: flex; flex-direction: column; width: 1366px; height: 768px; overflow: hidden; }
    .view { display: grid; grid-template-columns: 1349px 17px; height: 607px; }
    .scroll { display: grid; grid-template-rows: 29px 330px 1fr; justify-items: center; background: #f1f1f1; }
    .thumb { width: 13px; background: #c1c1c1; }
    .up, .down { border: 4px solid transparent; }
    .up { border-bottom-color: #505050; border-top: 0; margin-top: 7px; height: 0; }
    .down { border-top-color: #505050; border-bottom: 0; align-self: end; margin-bottom: 7px; }
  `;
  render() {
    return html`
      <browser-chrome></browser-chrome>
      <div class="view"><invoice-page></invoice-page><div class="scroll"><i class="up"></i><i class="thumb"></i><i class="down"></i></div></div>
      <task-bar></task-bar>`;
  }
}
